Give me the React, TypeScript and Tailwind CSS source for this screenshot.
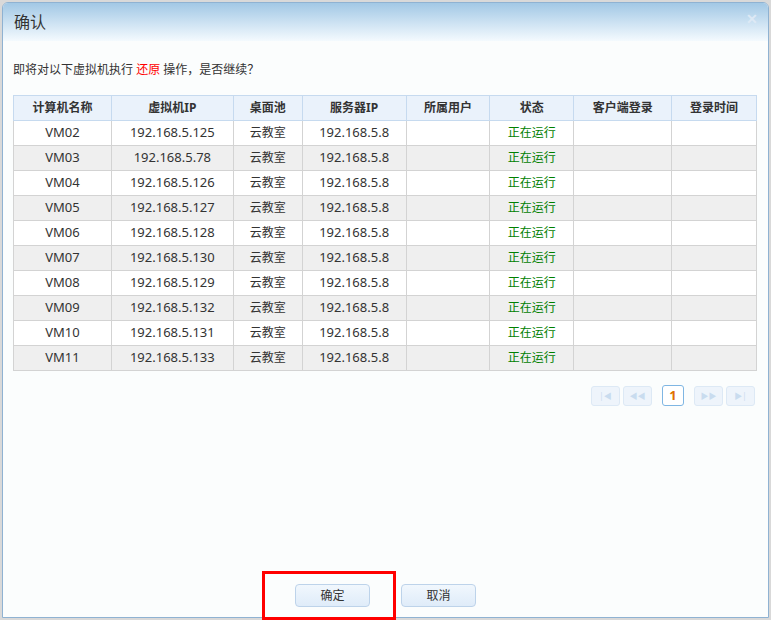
import React from 'react';

const rows = [
  ['VM02', '192.168.5.125'],
  ['VM03', '192.168.5.78'],
  ['VM04', '192.168.5.126'],
  ['VM05', '192.168.5.127'],
  ['VM06', '192.168.5.128'],
  ['VM07', '192.168.5.130'],
  ['VM08', '192.168.5.129'],
  ['VM09', '192.168.5.132'],
  ['VM10', '192.168.5.131'],
  ['VM11', '192.168.5.133'],
];

const headers = ['计算机名称', '虚拟机IP', '桌面池', '服务器IP', '所属用户', '状态', '客户端登录', '登录时间'];
const widths = ['w-[98px]', 'w-[122px]', 'w-[69px]', 'w-[104px]', 'w-[84px]', 'w-[84px]', 'w-[98px]', 'w-[85px]'];

function PageBtn({ label }: { label: string }) {
  return (
    <div className="flex h-[20px] w-[29px] items-center justify-center rounded-[3px] border border-[#dde9f5] bg-[#eef4fb] text-[8px] text-[#c9dcef]">
      {label}
    </div>
  );
}

export default function App() {
  return (
    <div
      className="relative h-[620px] w-[771px] overflow-hidden bg-[#d9d9d9] pl-[2px] pt-[2px]"
      style={{ fontFamily: '"Noto Sans", "Noto Sans CJK SC", sans-serif' }}
    >
      <div className="flex h-[616px] w-[767px] flex-col overflow-hidden rounded-t-[6px] border border-[#8fb2d2] bg-[#fbfdfd]">
        <div className="relative flex h-[38px] shrink-0 items-center bg-gradient-to-b from-[#a2c8e5] to-[#f4fafe] pl-[11px]">
          <span className="text-[16px] text-[#333]">确认</span>
          <span className="absolute right-[10px] top-[5px] text-[14px] font-bold text-[#dde9f5]">✕</span>
        </div>

        <div className="flex flex-1 flex-col px-[10px]">
          <div className="mt-[20px] h-[18px] text-[12px] leading-[18px] text-[#333]">
            即将对以下虚拟机执行 <span className="text-[#ff0000]">还原</span> 操作，是否继续？
          </div>

          <table className="mt-[16px] w-[744px] border-collapse text-center text-[12px] text-[#333]">
            <thead>
              <tr className="h-[25px] bg-[#eaf2fb]">
                {headers.map((h, i) => (
                  <th key={h} className={`${widths[i]} border border-[#c6daef] p-0 font-bold`}>
                    {h}
                  </th>
                ))}
              </tr>
            </thead>
            <tbody>
              {rows.map(([name, ip], r) => (
                <tr key={name} className={`h-[25px] ${r % 2 === 1 ? 'bg-[#efefef]' : 'bg-white'}`}>
                  <td className="border border-[#d3d3d3] p-0 text-[13px]">{name}</td>
                  <td className="border border-[#d3d3d3] p-0 text-[13px]">{ip}</td>
                  <td className="border border-[#d3d3d3] p-0">云教室</td>
                  <td className="border border-[#d3d3d3] p-0 text-[13px]">192.168.5.8</td>
                  <td className="border border-[#d3d3d3] p-0"></td>
                  <td className="border border-[#d3d3d3] p-0 text-[#008000]">正在运行</td>
                  <td className="border border-[#d3d3d3] p-0"></td>
                  <td className="border border-[#d3d3d3] p-0"></td>
                </tr>
              ))}
            </tbody>
          </table>

          <div className="mt-[14px] flex items-center justify-end pr-[3px]">
            <div className="flex gap-[3px]">
              <PageBtn label="|◀" />
              <PageBtn label="◀◀" />
            </div>
            <div className="mx-[10px] flex h-[21px] w-[22px] items-center justify-center rounded-[3px] border border-[#7fb6e3] bg-white text-[13px] font-bold text-[#e07000]">
              1
            </div>
            <div className="flex gap-[3px]">
              <PageBtn label="▶▶" />
              <PageBtn label="▶|" />
            </div>
          </div>

          <div className="mt-auto flex justify-center gap-[31px] pb-[10px]">
            <button className="h-[23px] w-[75px] rounded-[4px] border border-[#bdd3ea] bg-gradient-to-b from-[#f1f7fd] to-[#dfecf9] text-[12px] text-[#333]">
              确定
            </button>
            <button className="h-[23px] w-[75px] rounded-[4px] border border-[#bdd3ea] bg-gradient-to-b from-[#f1f7fd] to-[#dfecf9] text-[12px] text-[#333]">
              取消
            </button>
          </div>
        </div>
      </div>
      <div className="absolute left-[262px] top-[571px] h-[49px] w-[134px] border-[3px] border-[#ff0000]"></div>
    </div>
  );
}
